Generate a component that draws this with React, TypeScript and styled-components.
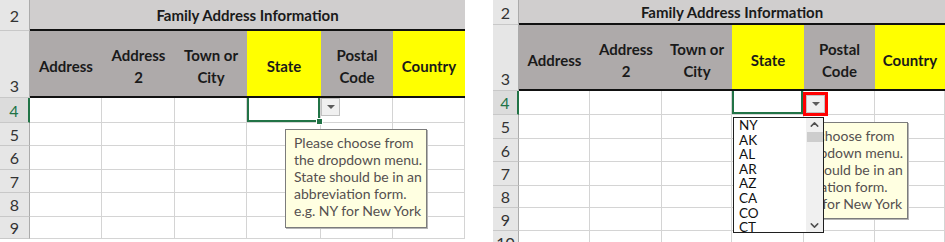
import styled, { createGlobalStyle } from 'styled-components'
import { ChevronUp, ChevronDown } from 'lucide-react'

const GlobalStyle = createGlobalStyle`
  body {
    margin: 0;
    background: #fff;
    font-family: Lato, "Liberation Sans", sans-serif;
  }
`

const Page = styled.div`
  display: flex;
  align-items: flex-start;
  gap: 28px;
  width: 945px;
  height: 242px;
  overflow: hidden;
`

const Grid = styled.div<{ $cols: number[]; $rows: number[]; $height: number }>`
  display: grid;
  grid-template-columns: ${p => p.$cols.map(c => c + 'px').join(' ')};
  grid-template-rows: ${p => p.$rows.map(r => r + 'px').join(' ')};
  height: ${p => p.$height}px;
  overflow: hidden;
  flex-shrink: 0;
`

const RowHead = styled.div<{ $active?: boolean; $bottom?: boolean }>`
  display: flex;
  justify-content: center;
  align-items: ${p => (p.$bottom ? 'flex-end' : 'center')};
  padding-bottom: ${p => (p.$bottom ? '2px' : '0')};
  box-sizing: border-box;
  background: ${p => (p.$active ? '#dcdcdc' : '#e6e6e6')};
  border-right: ${p => (p.$active ? '2px solid #217346' : '1px solid #ababab')};
  border-bottom: 1px solid #c8c8c8;
  color: ${p => (p.$active ? '#217346' : '#333')};
  font-size: 16px;
`

const Title = styled.div`
  grid-column: span 6;
  display: flex;
  justify-content: center;
  align-items: center;
  background: #d0cece;
  border-bottom: 2px solid #111;
  font-size: 15px;
  font-weight: 700;
  color: #1a1a1a;
`

const Head = styled.div<{ $yellow?: boolean }>`
  display: flex;
  justify-content: center;
  align-items: center;
  padding-top: 5px;
  box-sizing: border-box;
  background: ${p => (p.$yellow ? '#ffff00' : '#aeaaaa')};
  border-bottom: 2px solid #111;
  font-size: 15px;
  font-weight: 700;
  line-height: 22px;
  color: #1a1a1a;
  text-align: center;
  white-space: pre-line;
`

const Cell = styled.div<{ $selected?: boolean }>`
  position: ${p => (p.$selected ? 'relative' : 'static')};
  z-index: ${p => (p.$selected ? 3 : 'auto')};
  box-sizing: border-box;
  background: #fff;
  border-right: 1px solid #d4d4d4;
  border-bottom: 1px solid #d4d4d4;
  ${p =>
    p.$selected &&
    `
    box-shadow: inset 2px -2px 0 #217346, inset -2px 0 0 #217346;
  `}
`

const Handle = styled.span`
  position: absolute;
  right: -3px;
  bottom: -3px;
  width: 5px;
  height: 5px;
  background: #217346;
  border: 1px solid #fff;
`

const Frame = styled.div<{ $red?: boolean }>`
  position: absolute;
  left: 100%;
  top: ${p => (p.$red ? '1px' : '0')};
  margin-left: ${p => (p.$red ? '0' : '1px')};
  border: ${p => (p.$red ? '3px solid #ff0000' : '0')};
  box-sizing: content-box;
`

const DropButton = styled.div`
  display: flex;
  justify-content: center;
  align-items: center;
  width: 17px;
  height: 16px;
  background: #f0f0f0;
  border: 1px solid #c2c2c2;

  &::after {
    content: '';
    border-left: 4px solid transparent;
    border-right: 4px solid transparent;
    border-top: 4px solid #5c5c5c;
  }
`

const Tip = styled.div<{ $left: number; $top: number; $height: number }>`
  position: absolute;
  left: ${p => p.$left}px;
  top: ${p => p.$top}px;
  width: 142px;
  height: ${p => p.$height}px;
  box-sizing: border-box;
  padding: 4px 0 0 8px;
  background: #ffffe1;
  border: 1px solid #7c7c7c;
  box-shadow: 1px 1px 0 #b5b5b5;
  font-size: 14px;
  line-height: 17px;
  color: #555050;
  white-space: nowrap;
`

const List = styled.div`
  position: absolute;
  left: 1px;
  top: 26px;
  z-index: 2;
  display: flex;
  width: 91px;
  height: 116px;
  box-sizing: border-box;
  background: #fff;
  border: 1px solid #1f1f1f;
`

const Items = styled.ul`
  flex: 1;
  margin: 0;
  padding: 0 0 0 5px;
  list-style: none;
  font-size: 13.5px;
  line-height: 14.6px;
  color: #111;
`

const Scroll = styled.div`
  display: flex;
  flex-direction: column;
  align-items: center;
  width: 17px;
  background: #f0f0f0;
  color: #505050;
`

const Thumb = styled.div`
  width: 16px;
  height: 10px;
  margin-top: 1px;
  background: #cdcdcd;
`

const Track = styled.div`
  flex: 1;
`

const headers = [
  { label: 'Address' },
  { label: 'Address\n2' },
  { label: 'Town or\nCity' },
  { label: 'State', yellow: true },
  { label: 'Postal\nCode' },
  { label: 'Country', yellow: true },
]

const states = ['NY', 'AK', 'AL', 'AR', 'AZ', 'CA', 'CO', 'CT']

const hint = [
  'Please choose from',
  'the dropdown menu.',
  'State should be in an',
  'abbreviation form.',
  'e.g. NY for New York',
]

type SheetProps = {
  cols: number[]
  rows: number[]
  height: number
  open?: boolean
}

const Sheet = ({ cols, rows, height, open }: SheetProps) => {
  const dataRows = rows.slice(2).map((_, i) => i + 4)
  return (
    <Grid $cols={cols} $rows={rows} $height={height}>
      <RowHead>2</RowHead>
      <Title>Family Address Information</Title>
      <RowHead $bottom>3</RowHead>
      {headers.map(h => (
        <Head key={h.label} $yellow={h.yellow}>
          {h.label}
        </Head>
      ))}
      {dataRows.map(n => (
        <Row key={n} n={n} open={open} />
      ))}
    </Grid>
  )
}

const Row = ({ n, open }: { n: number; open?: boolean }) => (
  <>
    <RowHead $active={n === 4}>{n}</RowHead>
    {headers.map((h, c) => {
      const selected = n === 4 && c === 3
      return (
        <Cell key={h.label} $selected={selected}>
          {selected && !open && <Handle />}
          {selected && (
            <Frame $red={open}>
              <DropButton />
            </Frame>
          )}
          {selected && (
            <Tip $left={open ? 34 : 38} $top={31} $height={open ? 97 : 99}>
              {hint.map(line => (
                <div key={line}>{line}</div>
              ))}
            </Tip>
          )}
          {selected && open && (
            <List>
              <Items>
                {states.map(s => (
                  <li key={s}>{s}</li>
                ))}
              </Items>
              <Scroll>
                <ChevronUp size={13} strokeWidth={2.75} />
                <Thumb />
                <Track />
                <ChevronDown size={13} strokeWidth={2.75} />
              </Scroll>
            </List>
          )}
        </Cell>
      )
    })}
  </>
)

export default function App() {
  return (
    <>
      <GlobalStyle />
      <Page>
        <Sheet
          cols={[30, 72, 73, 72, 74, 72, 72]}
          rows={[31, 67, 25, 23, 24, 23, 24, 22]}
          height={239}
        />
        <Sheet
          cols={[26, 71, 72, 70, 72, 71, 70]}
          rows={[25, 66, 24, 24, 23, 24, 22, 23, 24]}
          height={242}
          open
        />
      </Page>
    </>
  )
}
